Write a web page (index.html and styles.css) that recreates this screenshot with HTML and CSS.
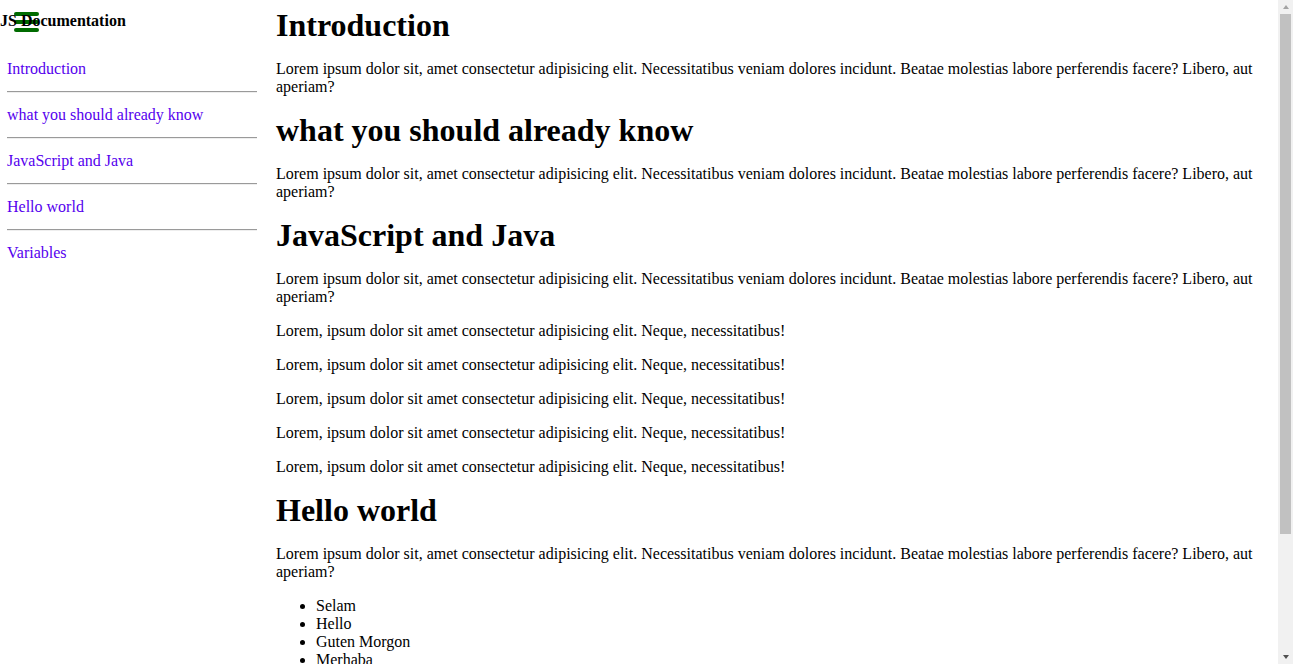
FILE: index.html
```html
<!DOCTYPE html>
<html lang="en">
<head>
<meta charset="utf-8">
<title>JS Documentation</title>
<link rel="stylesheet" href="styles.css">
</head>
<body>
<nav class="sidebar" id="navbar">
  <header class="nav-title">
    <span class="menu-icon" aria-hidden="true"><span></span><span></span><span></span></span>
    <span class="nav-title-text">JS Documentation</span>
  </header>
  <ul class="nav-list">
    <li class="nav-item"><a class="nav-link" href="#Introduction">Introduction</a></li>
    <li class="nav-item"><a class="nav-link" href="#what_you_should_already_know">what you should already know</a></li>
    <li class="nav-item"><a class="nav-link" href="#JavaScript_and_Java">JavaScript and Java</a></li>
    <li class="nav-item"><a class="nav-link" href="#Hello_world">Hello world</a></li>
    <li class="nav-item"><a class="nav-link" href="#Variables">Variables</a></li>
  </ul>
</nav>
<main class="main-doc" id="main-doc">
  <section class="main-section" id="Introduction">
    <h1 class="section-title">Introduction</h1>
    <p class="text">Lorem ipsum dolor sit, amet consectetur adipisicing elit. Necessitatibus veniam dolores incidunt. Beatae molestias labore perferendis facere? Libero, aut aperiam?</p>
  </section>
  <section class="main-section" id="what_you_should_already_know">
    <h1 class="section-title">what you should already know</h1>
    <p class="text">Lorem ipsum dolor sit, amet consectetur adipisicing elit. Necessitatibus veniam dolores incidunt. Beatae molestias labore perferendis facere? Libero, aut aperiam?</p>
  </section>
  <section class="main-section" id="JavaScript_and_Java">
    <h1 class="section-title">JavaScript and Java</h1>
    <p class="text">Lorem ipsum dolor sit, amet consectetur adipisicing elit. Necessitatibus veniam dolores incidunt. Beatae molestias labore perferendis facere? Libero, aut aperiam?</p>
    <p class="text">Lorem, ipsum dolor sit amet consectetur adipisicing elit. Neque, necessitatibus!</p>
    <p class="text">Lorem, ipsum dolor sit amet consectetur adipisicing elit. Neque, necessitatibus!</p>
    <p class="text">Lorem, ipsum dolor sit amet consectetur adipisicing elit. Neque, necessitatibus!</p>
    <p class="text">Lorem, ipsum dolor sit amet consectetur adipisicing elit. Neque, necessitatibus!</p>
    <p class="text">Lorem, ipsum dolor sit amet consectetur adipisicing elit. Neque, necessitatibus!</p>
  </section>
  <section class="main-section" id="Hello_world">
    <h1 class="section-title">Hello world</h1>
    <p class="text">Lorem ipsum dolor sit, amet consectetur adipisicing elit. Necessitatibus veniam dolores incidunt. Beatae molestias labore perferendis facere? Libero, aut aperiam?</p>
    <ul class="greetings">
      <li>Selam</li>
      <li>Hello</li>
      <li>Guten Morgon</li>
      <li>Merhaba</li>
    </ul>
  </section>
  <section class="main-section" id="Variables">
    <h1 class="section-title">Variables</h1>
    <p class="text">Lorem ipsum dolor sit, amet consectetur adipisicing elit. Necessitatibus veniam dolores incidunt. Beatae molestias labore perferendis facere? Libero, aut aperiam?</p>
  </section>
</main>
<div class="scrollbar" aria-hidden="true">
  <span class="scroll-btn scroll-up"></span>
  <span class="scroll-thumb"></span>
  <span class="scroll-track"></span>
  <span class="scroll-btn scroll-down"></span>
</div>
</body>
</html>
```
FILE: styles.css
```css
html, body {
  margin: 0;
  padding: 0;
}

body {
  font-family: "Liberation Serif", "Times New Roman", serif;
  font-size: 16px;
  color: #000;
  background: #fff;
}

.sidebar {
  position: fixed;
  top: 0;
  left: 0;
  width: 265px;
  height: 100%;
  background: #fff;
}

.nav-title {
  position: relative;
  padding-top: 12px;
  line-height: 18px;
  font-weight: bold;
}

.nav-title-text {
  position: relative;
  z-index: 1;
}

.menu-icon {
  position: absolute;
  left: 14px;
  top: 12px;
  width: 25px;
  display: flex;
  flex-direction: column;
  gap: 4.5px;
}

.menu-icon span {
  display: block;
  height: 3.5px;
  border-radius: 2px;
  background: #006b00;
}

.nav-list {
  list-style: none;
  margin: 18px 0 0 7px;
  padding: 0;
  width: 250px;
}

.nav-item + .nav-item {
  border-top: 1px solid #9a9a9a;
}

.nav-item + .nav-item::before {
  content: "";
  display: block;
  height: 1px;
  background: #eeeeee;
}

.nav-link {
  display: block;
  padding: 13px 0 13px;
  line-height: 18px;
  color: #5500ee;
  text-decoration: none;
}

.nav-item:first-child .nav-link {
  padding-top: 12px;
}

.main-doc {
  margin-left: 276px;
  padding: 7px 23px 8px 0;
}

.section-title {
  margin: 0;
  font-size: 32px;
  font-weight: bold;
}

.text {
  margin: 16px 0;
}

.greetings {
  margin: 16px 0;
  padding-left: 40px;
}

/* classic browser scrollbar drawn over the right edge */
.scrollbar {
  position: fixed;
  top: 0;
  right: 0;
  width: 15px;
  height: 100%;
  background: #f1f1f1;
  display: flex;
  flex-direction: column;
  align-items: center;
}

.scroll-btn {
  flex: 0 0 14px;
  width: 15px;
  display: flex;
  justify-content: center;
  align-items: center;
}

.scroll-btn::after {
  content: "";
  width: 0;
  height: 0;
  border-left: 3.5px solid transparent;
  border-right: 3.5px solid transparent;
}

.scroll-up::after {
  border-bottom: 4px solid #a3a3a3;
}

.scroll-down::after {
  border-top: 4px solid #505050;
}

.scroll-thumb {
  flex: 0 0 520px;
  width: 11px;
  background: #c1c1c1;
}

.scroll-track {
  flex: 1 1 auto;
}
```
